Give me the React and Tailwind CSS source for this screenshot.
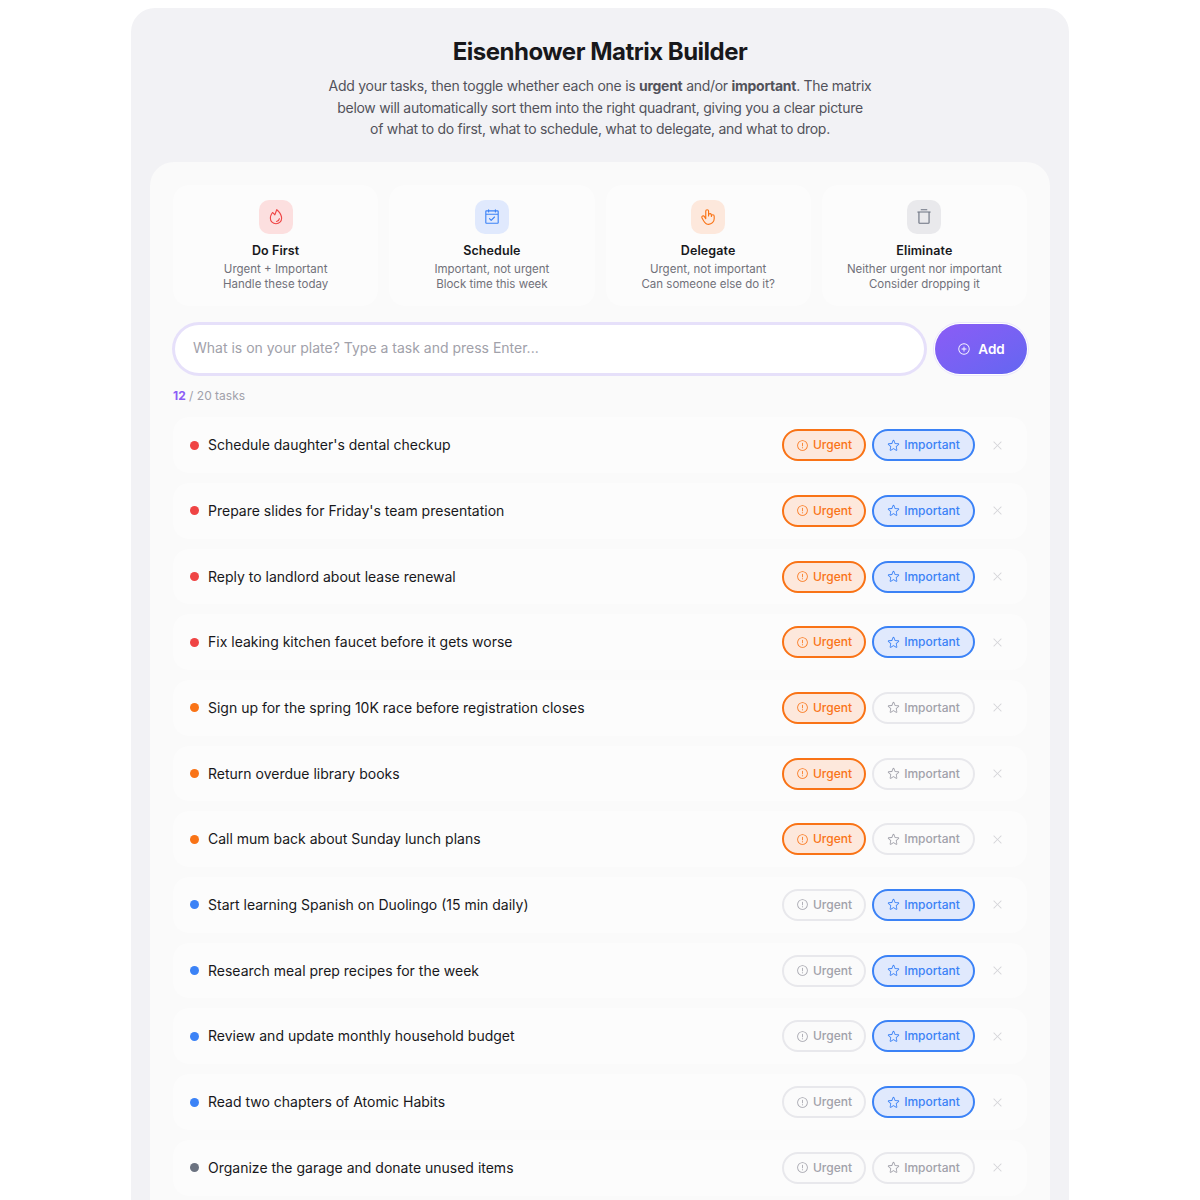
import { PiFire, PiCalendarCheck, PiHandPointing, PiTrashSimple, PiWarningCircle, PiStar, PiPlusCircle, PiX } from 'react-icons/pi';

const cuadrantes = [
  { titulo: 'Do First', l1: 'Urgent + Important', l2: 'Handle these today', Icon: PiFire, caja: 'bg-[#fcdfdf] text-[#ef4444]' },
  { titulo: 'Schedule', l1: 'Important, not urgent', l2: 'Block time this week', Icon: PiCalendarCheck, caja: 'bg-[#e0e9fd] text-[#3b82f6]' },
  { titulo: 'Delegate', l1: 'Urgent, not important', l2: 'Can someone else do it?', Icon: PiHandPointing, caja: 'bg-[#fde8dc] text-[#f97316]' },
  { titulo: 'Eliminate', l1: 'Neither urgent nor important', l2: 'Consider dropping it', Icon: PiTrashSimple, caja: 'bg-[#e9e9ec] text-[#6b7280]' },
];

const tareas = [
  { texto: "Schedule daughter's dental checkup", urgente: true, importante: true },
  { texto: "Prepare slides for Friday's team presentation", urgente: true, importante: true },
  { texto: 'Reply to landlord about lease renewal', urgente: true, importante: true },
  { texto: 'Fix leaking kitchen faucet before it gets worse', urgente: true, importante: true },
  { texto: 'Sign up for the spring 10K race before registration closes', urgente: true, importante: false },
  { texto: 'Return overdue library books', urgente: true, importante: false },
  { texto: 'Call mum back about Sunday lunch plans', urgente: true, importante: false },
  { texto: 'Start learning Spanish on Duolingo (15 min daily)', urgente: false, importante: true },
  { texto: 'Research meal prep recipes for the week', urgente: false, importante: true },
  { texto: 'Review and update monthly household budget', urgente: false, importante: true },
  { texto: 'Read two chapters of Atomic Habits', urgente: false, importante: true },
  { texto: 'Organize the garage and donate unused items', urgente: false, importante: false },
];

function colorPunto(t) {
  if (t.urgente && t.importante) return 'bg-[#ef4444]';
  if (t.urgente) return 'bg-[#f97316]';
  if (t.importante) return 'bg-[#3b82f6]';
  return 'bg-[#6b7280]';
}

function Toggle({ activo, Icon, estiloActivo, ancho, children }) {
  return (
    <button className={`h-8 rounded-full border-2 flex items-center justify-center gap-[4px] text-[12px] font-medium ${ancho} ${activo ? estiloActivo : 'border-[#e8e8ec] bg-[#fbfbfb] text-[#a1a1aa]'}`}>
      <Icon size={13} />
      {children}
    </button>
  );
}

export default function App() {
  return (
    <div className="h-[1200px] overflow-hidden bg-white text-[#18181b] font-['Inter',sans-serif]">
      <div className="w-[938px] mx-auto mt-2 rounded-t-3xl bg-[#f2f2f5] px-[19px] pt-[27px]">
        <h1 className="text-center text-2xl leading-[34px] font-bold tracking-[-0.5px]">Eisenhower Matrix Builder</h1>
        <p className="mt-[6px] mx-auto w-[600px] text-center text-[14px] leading-[21.6px] tracking-[-0.28px] text-[#52525b]">
          Add your tasks, then toggle whether each one is <strong className="font-bold">urgent</strong> and/or <strong className="font-bold">important</strong>. The matrix<br />
          below will automatically sort them into the right quadrant, giving you a clear picture<br />
          of what to do first, what to schedule, what to delegate, and what to drop.
        </p>

        <div className="mt-[22.5px] rounded-t-3xl bg-[#fafafa] px-[23px] pt-[23px] pb-6">
          <div className="grid grid-cols-4 gap-[11px]">
            {cuadrantes.map((c) => (
              <div key={c.titulo} className="h-[121px] rounded-2xl bg-[#fcfcfc] pt-[15px] flex flex-col items-center">
                <div className={`w-[34px] h-[34px] rounded-[10px] flex items-center justify-center ${c.caja}`}>
                  <c.Icon size={18} />
                </div>
                <h3 className="mt-[8px] text-[12.5px] leading-[18px] tracking-[0.1px] font-semibold">{c.titulo}</h3>
                <p className="mt-[2px] text-center text-[11.5px] leading-[15px] text-[#71717a]">{c.l1}<br />{c.l2}</p>
              </div>
            ))}
          </div>

          <div className="mt-[18px] flex gap-[10px] items-center">
            <div className="flex-1 h-12 ml-[2px] mr-[2px] rounded-full bg-white ring-[3px] ring-[#e6e0fa] flex items-center px-[18px] pb-[2px] text-sm text-[#a1a1aa]">
              What is on your plate? Type a task and press Enter...
            </div>
            <button className="w-[92px] h-[50px] ml-[-1px] rounded-full bg-gradient-to-br from-[#8b5cf6] to-[#6366f1] ring-1 ring-[#ece8fb] ring-offset-1 text-white text-[13.5px] font-semibold flex items-center justify-center gap-[7px]">
              <PiPlusCircle size={14} />
              Add
            </button>
          </div>

          <p className="mt-[14px] text-xs leading-4 text-[#a1a1aa]"><span className="font-bold text-[#8b5cf6]">12</span> / 20 tasks</p>

          <div className="mt-[13px] flex flex-col gap-[10px]">
            {tareas.map((t) => (
              <div key={t.texto} className="h-[55.7px] rounded-2xl bg-[#fcfcfc] pl-[17px] pr-[23px] flex items-center">
                <span className={`w-[9px] h-[9px] rounded-full shrink-0 ${colorPunto(t)}`} />
                <span className="ml-[9px] flex-1 text-sm">{t.texto}</span>
                <div className="flex items-center gap-[6px]">
                  <Toggle activo={t.urgente} Icon={PiWarningCircle} ancho="w-[84px]" estiloActivo="border-[#f97316] bg-[#fde8dc] text-[#f97316]">Urgent</Toggle>
                  <Toggle activo={t.importante} Icon={PiStar} ancho="w-[103px]" estiloActivo="border-[#3b82f6] bg-[#e0e9fd] text-[#3b82f6]">Important</Toggle>
                </div>
                <button className="ml-[16px] text-[#d4d4d8]"><PiX size={13} /></button>
              </div>
            ))}
          </div>
        </div>
      </div>
    </div>
  );
}
